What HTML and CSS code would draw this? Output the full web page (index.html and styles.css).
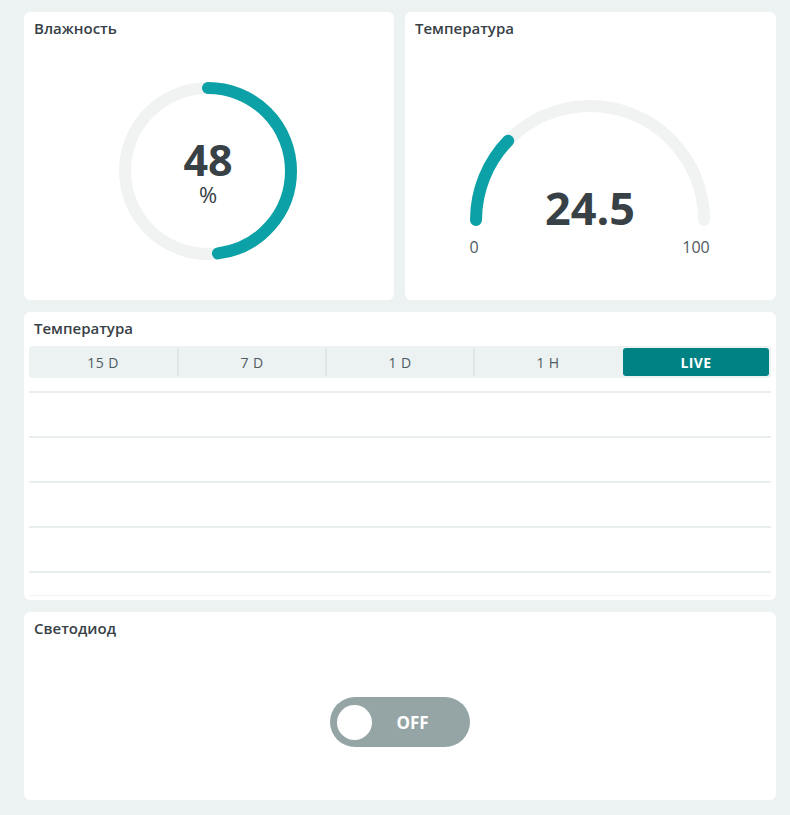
FILE: index.html
```html
<!DOCTYPE html>
<html lang="ru">
<head>
<meta charset="utf-8">
<title>Dashboard</title>
<link rel="stylesheet" href="styles.css">
</head>
<body>
<main class="dashboard">
  <section class="card gauge-card">
    <h2 class="card-title">Влажность</h2>
    <div class="card-body">
      <svg class="gauge" width="370" height="255" viewBox="0 0 370 255">
        <circle class="track" cx="184" cy="126" r="83"/>
        <circle class="value-arc" cx="184" cy="126" r="83" stroke-dasharray="250.3 521.5" transform="rotate(-90 184 126)"/>
        <text class="big-value" x="184" y="131" text-anchor="middle">48</text>
        <text class="unit" x="184" y="158" text-anchor="middle">%</text>
      </svg>
    </div>
  </section>

  <section class="card gauge-card">
    <h2 class="card-title">Температура</h2>
    <div class="card-body">
      <svg class="gauge" width="371" height="255" viewBox="0 0 371 255">
        <path class="track" d="M71 175 A114 114 0 0 1 299 175"/>
        <path class="value-arc" d="M71 175 A114 114 0 0 1 103.2 95.7"/>
        <text class="big-value large" x="185" y="180" text-anchor="middle">24.5</text>
        <text class="scale" x="69" y="208" text-anchor="middle">0</text>
        <text class="scale" x="291" y="208" text-anchor="middle">100</text>
      </svg>
    </div>
  </section>

  <section class="card chart-card wide">
    <h2 class="card-title">Температура</h2>
    <div class="tabs">
      <button class="tab">15 D</button>
      <button class="tab">7 D</button>
      <button class="tab">1 D</button>
      <button class="tab">1 H</button>
      <button class="tab active">LIVE</button>
    </div>
    <div class="chart">
      <div class="grid-line"></div>
      <div class="grid-line"></div>
      <div class="grid-line"></div>
      <div class="grid-line"></div>
      <div class="grid-line"></div>
      <div class="grid-line last"></div>
    </div>
  </section>

  <section class="card switch-card wide">
    <h2 class="card-title">Светодиод</h2>
    <div class="card-body">
      <div class="toggle">
        <span class="knob"></span>
        <span class="toggle-label">OFF</span>
      </div>
    </div>
  </section>
</main>
</body>
</html>
```

FILE: styles.css
```css
* { box-sizing: border-box; }

html, body {
  margin: 0;
  background: #ecf1f1;
}

body {
  font-family: "Open Sans", "Liberation Sans", sans-serif;
  color: #374146;
  padding: 12px 14px 15px 24px;
}

.dashboard {
  display: grid;
  grid-template-columns: 370px 371px;
  column-gap: 11px;
  row-gap: 12px;
  grid-template-rows: 288px 288px 188px;
}

.card {
  background: #fff;
  border-radius: 6px;
  display: flex;
  flex-direction: column;
  overflow: hidden;
}

.wide { grid-column: 1 / -1; }

.card-title {
  margin: 0;
  padding: 6px 10px 0;
  font-size: 15px;
  font-weight: 600;
  line-height: 20px;
  color: #374146;
}

.card-body {
  flex: 1;
  display: flex;
  align-items: center;
  justify-content: center;
}

.gauge-card .card-body {
  align-items: flex-start;
  justify-content: flex-start;
  padding-top: 7px;
}

.gauge { display: block; }

.track {
  fill: none;
  stroke: #f1f3f3;
  stroke-width: 12;
  stroke-linecap: round;
}

.value-arc {
  fill: none;
  stroke: #0ca1a6;
  stroke-width: 12;
  stroke-linecap: round;
}

.big-value {
  font-family: "Open Sans", sans-serif;
  font-weight: 700;
  font-size: 43px;
  fill: #374146;
}

.big-value.large { font-size: 45px; }

.unit {
  font-family: "Open Sans", sans-serif;
  font-size: 22px;
  fill: #374146;
}

.scale {
  font-family: "Open Sans", sans-serif;
  font-size: 16px;
  fill: #4e5b61;
}

/* chart card */
.chart-card { padding: 0 5px; }
.chart-card .card-title { padding-left: 5px; padding-right: 5px; }

.tabs {
  margin-top: 8px;
  display: grid;
  grid-template-columns: repeat(5, 1fr);
  background: #ecf1f1;
  border-radius: 4px;
  height: 32px;
  padding: 2px 2px 2px 0;
}

.tab {
  font-family: "Open Sans", sans-serif;
  font-size: 14px;
  color: #4e5b61;
  background: transparent;
  border: 0;
  border-left: 2px solid #dfe8e8;
  padding: 0;
  letter-spacing: 0.4px;
}

.tab:first-child { border-left: 0; }

.tab.active {
  background: #008184;
  color: #fff;
  font-weight: 700;
  border-left: 0;
  border-radius: 3px;
  margin-left: 2px;
}

.chart {
  display: flex;
  flex-direction: column;
  padding-top: 13px;
}

.grid-line {
  height: 2px;
  background: #e9eeee;
  margin-bottom: 43px;
}

.grid-line:nth-child(5) { margin-bottom: 22px; }

.grid-line.last {
  height: 1px;
  background: #eef2f2;
  margin-bottom: 0;
}

/* switch */
.toggle {
  width: 140px;
  height: 50px;
  border-radius: 25px;
  background: #95a5a6;
  display: flex;
  align-items: center;
  padding-left: 7px;
  margin-top: 6px;
}

.knob {
  width: 35px;
  height: 35px;
  border-radius: 50%;
  background: #fff;
}

.toggle-label {
  flex: 1;
  text-align: center;
  color: #fff;
  font-weight: 700;
  font-size: 17px;
  padding-right: 17px;
}
```
